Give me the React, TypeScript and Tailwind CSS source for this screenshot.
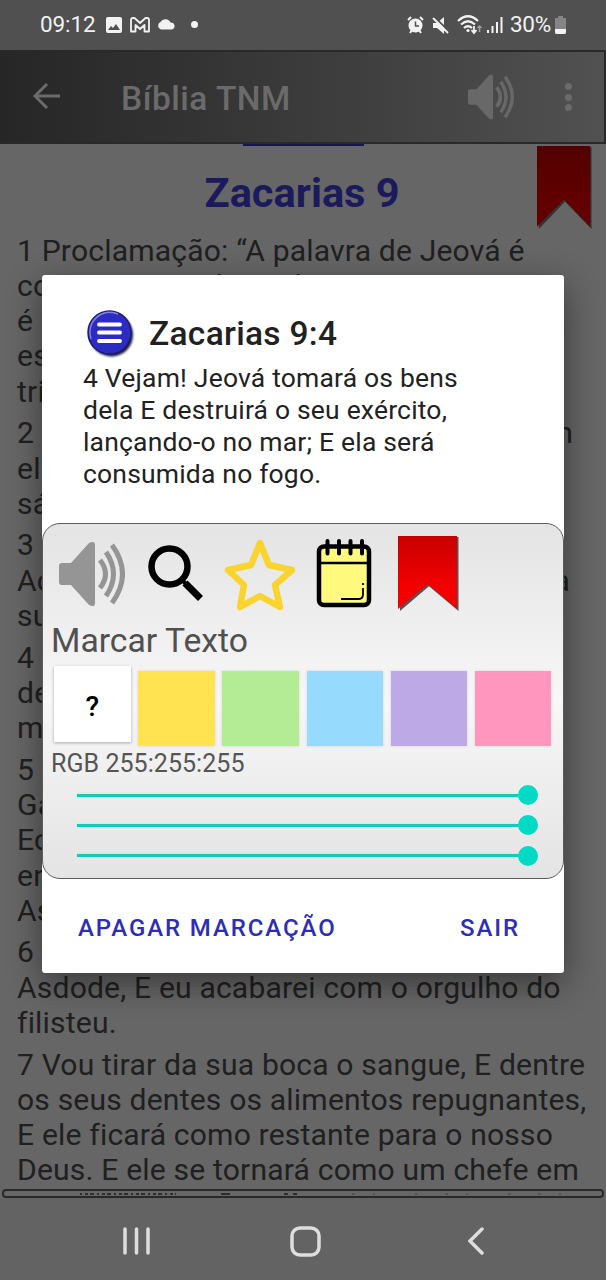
import React from "react";

const verses: string[][] = [
  ["1 Proclamação: “A palavra de Jeová é", "contra a terra de Hadraque, E Damasco", "é o seu alvo — Pois os olhos de Jeová", "estão sobre a humanidade E sobre as", "tribos de Israel —"],
  ["2 E contra Hamate, que faz divisa com", "ela, E contra Tiro e Sídon, pois são", "sábias."],
  ["3 Tiro construiu para si um baluarte.", "Acumulou prata como pó E ouro como a", "sujeira das ruas."],
  ["4 Vejam! Jeová tomará os bens", "dela E destruirá o seu exército, no", "mar; E ela será consumida no fogo."],
  ["5 Ascalom verá isso e terá medo;", "Gaza sentirá muita angústia, Também", "Ecrom, porque a sua", "envergonhada. De Gaza", "Ascalom não será habitada."],
  ["6 Um filho ilegítimo se fixará em", "Asdode, E eu acabarei com o orgulho do", "filisteu."],
  ["7 Vou tirar da sua boca o sangue, E dentre", "os seus dentes os alimentos repugnantes,", "E ele ficará como restante para o nosso", "Deus. E ele se tornará como um chefe em"],
];

/* Lines that reach the right margin of the column. */
const fullLines: Record<string, string> = {
  "é o seu alvo — Pois os olhos de Jeová": "block w-[549px] [text-align-last:justify]",
  "2 E contra Hamate, que faz divisa com": "block w-[556px] [text-align-last:justify]",
  "Acumulou prata como pó E ouro como a": "block w-[553px] [text-align-last:justify]",
};

function Speaker({ className }: { className: string }) {
  return (
    <svg viewBox="0 0 66 66" className={className} fill="currentColor">
      <path d="M3 22H12L30 2Q36 -1 36 4V62Q36 67 30 64L12 44H3Q0 44 0 41V25Q0 22 3 22Z" />
      <g fill="none" stroke="currentColor" strokeWidth="5">
        <path d="M41 19Q52 33 41 47" />
        <path d="M47 11Q62 33 47 55" />
        <path d="M53 4Q74 33 53 62" />
      </g>
    </svg>
  );
}

function Ribbon({ id, className, from, to, edge }: { id: string; className: string; from: string; to: string; edge: string }) {
  return (
    <svg viewBox="0 0 61 76" preserveAspectRatio="none" className={className}>
      <defs>
        <linearGradient id={id} x1="0" y1="0" x2="0" y2="1">
          <stop offset="0" stopColor={from} />
          <stop offset=".7" stopColor={to} />
        </linearGradient>
      </defs>
      <path d="M1 1H60.500V76L31 51L2 76Z" fill={edge} />
      <path d="M0 0H59V74L30 49L0 74Z" fill={`url(#${id})`} />
    </svg>
  );
}

function StatusBar() {
  return (
    <div className="flex h-[50px] shrink-0 items-center bg-[#505050] pl-[40px] text-[#f2f2f2]">
      <span className="w-[66px] text-[22.5px] tracking-[-0.1px]">09:12</span>
      <svg className="h-[16px] w-[16px]" viewBox="0 0 16 16">
        <rect width="16" height="16" rx="2" fill="currentColor" />
        <path d="M2 13L5 9L7 11L10 7L14 13Z" fill="#505050" />
      </svg>
      <svg className="ml-[8px] h-[16px] w-[20px]" viewBox="0 0 20 16" fill="none" stroke="currentColor" strokeWidth="1.8" strokeLinejoin="round">
        <path d="M1 14.500V3Q1 1 3 1H4.500L10 6L15.500 1H17Q19 1 19 3V14.500H14.500V8L10 12L5.500 8V14.500Z" />
      </svg>
      <svg className="mb-[2px] ml-[7px] h-[12px] w-[19px]" viewBox="0 0 19 12" fill="currentColor">
        <path d="M4 11.500a4 4 0 0 1-.5-7.500A5.500 5 0 0 1 13.500 4.500A3.800 3.600 0 0 1 15 11.500Z" />
      </svg>
      <span className="mb-[2px] ml-[15px] h-[7px] w-[7px] rounded-full bg-[#f2f2f2]" />
      <svg className="ml-[209px] h-[18px] w-[17px]" viewBox="0 0 17 18">
        <circle cx="8.5" cy="9.5" r="7" fill="currentColor" />
        <path d="M1 4L4 1M16 4L13 1M3 17L5 14M14 17L12 14" stroke="currentColor" strokeWidth="2" />
        <path d="M8.5 5.5V10H12" stroke="#505050" strokeWidth="1.5" fill="none" />
      </svg>
      <svg className="ml-[8px] h-[17px] w-[18px]" viewBox="0 0 18 17">
        <path d="M1 6H5L12 0V17L5 11H1Z" fill="currentColor" />
        <path d="M2.500 0L18 15.500" stroke="#505050" strokeWidth="2" />
        <path d="M1 1L16 16" stroke="currentColor" strokeWidth="2" />
      </svg>
      <svg className="ml-[7px] h-[20px] w-[25px]" viewBox="0 0 25 20" fill="none" stroke="currentColor" strokeWidth="2.2">
        <path d="M1 6Q11 -3.500 21 6M4 9.500Q11 3 18 9.500M7 13Q11 9.500 15 13" />
        <circle cx="11" cy="15.500" r="1.600" fill="currentColor" stroke="none" />
        <path d="M17 11V17M14.500 15L17 18L19.500 15" strokeWidth="1.800" />
        <path d="M22.500 17V11M20.500 13L22.500 11L24.500 13" strokeWidth="1.500" opacity=".5" />
      </svg>
      <svg className="ml-[5px] h-[16px] w-[16px]" viewBox="0 0 16 16" fill="currentColor">
        <path d="M0 13H2V16H0ZM4.500 9H6.500V16H4.500ZM9 5H11V16H9ZM13.500 0H15.500V16H13.500Z" />
      </svg>
      <span className="ml-[7px] w-[45px] text-[22.5px] tracking-[-0.3px]">30%</span>
      <svg className="h-[18px] w-[11px]" viewBox="0 0 11 18">
        <path d="M3 0H8V2H11V18H0V2H3Z" fill="#858585" />
        <path d="M0 13H11V16Q11 18 9 18H2Q0 18 0 16Z" fill="#f2f2f2" />
      </svg>
    </div>
  );
}

function AppBar() {
  return (
    <div className="flex h-[94px] shrink-0 items-center border-y-2 border-r-2 border-[#292929] bg-linear-to-r from-[#262626] to-[#515151] pl-[33px] text-[#6b6b6b]">
      <svg className="mb-[2px] h-[26px] w-[27px]" viewBox="0 0 27 26" fill="none" stroke="currentColor" strokeWidth="3">
        <path d="M14 1L2 13L14 25M2 13H27" />
      </svg>
      <h1 className="ml-[61px] w-[346px] pt-[4px] text-[33.5px] font-medium tracking-[0.5px]">Bíblia TNM</h1>
      <Speaker className="h-[46px] w-[48px] text-[#686868]" />
      <div className="ml-[50px] flex flex-col gap-[3.5px]">
        <i className="h-[7px] w-[7px] rounded-full bg-[#6b6b6b]" />
        <i className="h-[7px] w-[7px] rounded-full bg-[#6b6b6b]" />
        <i className="h-[7px] w-[7px] rounded-full bg-[#6b6b6b]" />
      </div>
    </div>
  );
}

function Dialog() {
  return (
    <div className="absolute top-[275px] left-[42px] flex h-[698px] w-[522px] flex-col rounded-[3px] bg-white shadow-[0_10px_34px_rgba(0,0,0,0.45)]">
      <div className="flex h-[248px] flex-col pt-[34px] pl-[41px]">
        <div className="flex h-[50px] items-center">
          <svg className="ml-[3px] h-[50px] w-[50px]" viewBox="0 0 50 50">
            <defs>
              <filter id="soft" x="-20%" y="-20%" width="140%" height="140%"><feGaussianBlur stdDeviation="1.2" /></filter>
            </defs>
            <circle cx="25.500" cy="26" r="21.500" fill="#17173f" filter="url(#soft)" />
            <circle cx="23.500" cy="23.500" r="21.500" fill="#2c2cc4" stroke="#1d1d70" strokeWidth="1.500" />
            <path d="M5 30A20 20 0 0 1 32 5" fill="none" stroke="#8080e0" strokeWidth="1.500" />
            <path d="M13 15.500H34M13 23.500H34M13 32H34" stroke="white" strokeWidth="3.800" strokeLinecap="round" />
          </svg>
          <h2 className="ml-[13px] pt-px text-[33.5px] font-medium tracking-[0.3px] text-[#212121]">Zacarias 9:4</h2>
        </div>
        <p className="mt-[3px] text-[26.5px] leading-[32px] tracking-[0.18px] whitespace-nowrap text-[#222]">
          4 Vejam! Jeová tomará os bens<br />
          dela E destruirá o seu exército,<br />
          lançando-o no mar; E ela será<br />
          consumida no fogo.
        </p>
      </div>
      <div className="flex h-[356px] flex-col rounded-[18px] border-[1.5px] border-[#5c5c5c] bg-linear-to-b from-[#e4e4e4] via-[#f7f7f7] to-[#e4e4e4]">
        <div className="flex h-[98.500px] items-start pl-[16px]">
          <Speaker className="mt-[17px] h-[66px] w-[66px] text-[#959595]" />
          <svg className="mt-[20.500px] ml-[23px] h-[58px] w-[57px]" viewBox="0 0 57 58" fill="none" stroke="#000">
            <circle cx="21.500" cy="21.500" r="18" strokeWidth="6.500" />
            <path d="M37 38L52.500 53.500" strokeWidth="7" />
            <path d="M33 34L39 40" strokeWidth="4" />
          </svg>
          <svg className="mt-[13.500px] ml-[18px] h-[74px] w-[74px]" viewBox="0 0 74 74" fill="none" stroke="#f9d42f" strokeWidth="6.500" strokeLinejoin="round">
            <path d="M37 5L46 27L69 32L52 47L57 69L37 58L17 69L21 47L5 32L28 27Z" />
          </svg>
          <svg className="mt-[13px] ml-[19px] h-[72px] w-[56px]" viewBox="0 0 56 72">
            <rect x="3" y="9.500" width="50" height="58.500" rx="5" fill="#fffa7d" stroke="#000" strokeWidth="4.500" />
            <path d="M3 26H53" stroke="#000" strokeWidth="2.500" />
            <path d="M11.500 4V16.500M23 4V16.500M34.500 4V16.500M46 4V16.500" stroke="#000" strokeWidth="4" strokeLinecap="round" />
            <path d="M25 62H43Q47 62 47 57V51M47 48V46" fill="none" stroke="#000" strokeWidth="1.800" />
          </svg>
          <Ribbon id="ribbon" className="mt-[11.500px] ml-[26px] h-[75px] w-[61px]" from="#c80000" to="#f40000" edge="#555" />
        </div>
        <h3 className="h-[43px] pl-[8px] text-[33.7px] leading-[36px] text-[#505050]">Marcar Texto</h3>
        <div className="flex h-[82px] gap-[7.7px] pl-[11px]">
          <button className="h-[76px] w-[76.500px] bg-white pt-[6px] text-[28px] font-medium text-black shadow-[0_1px_3px_rgba(0,0,0,0.3)]">?</button>
          <i className="mt-[5px] h-[75px] w-[76.500px] bg-[#ffe351] shadow-[0_0_3px_rgba(0,0,0,0.12)]" />
          <i className="mt-[5px] h-[75px] w-[76.500px] bg-[#b4ec96] shadow-[0_0_3px_rgba(0,0,0,0.12)]" />
          <i className="mt-[5px] h-[75px] w-[76.500px] bg-[#96dbfd] shadow-[0_0_3px_rgba(0,0,0,0.12)]" />
          <i className="mt-[5px] h-[75px] w-[76.500px] bg-[#bda9e6] shadow-[0_0_3px_rgba(0,0,0,0.12)]" />
          <i className="mt-[5px] h-[75px] w-[76.500px] bg-[#fe96bd] shadow-[0_0_3px_rgba(0,0,0,0.12)]" />
        </div>
        <p className="h-[32.500px] pl-[8px] text-[25px] leading-[31px] tracking-[0.05px] text-[#555]">RGB 255:255:255</p>
        {[0, 1, 2].map((n) => (
          <div key={n} className="flex h-[30.300px] items-center pl-[34px]">
            <span className="h-[3px] w-[443px] bg-[#14cbb9] shadow-[0_0_2px_#9ef0e8]" />
            <span className="-ml-[2px] h-[20px] w-[20px] rounded-full bg-[#03dac5]" />
          </div>
        ))}
      </div>
      <div className="flex h-[94px] items-center justify-between pt-[3px] pr-[44px] pl-[36px] text-[24px] font-medium tracking-[1.9px] text-[#2e2eb4]">
        <button>APAGAR MARCAÇÃO</button>
        <button>SAIR</button>
      </div>
    </div>
  );
}

export default function App() {
  return (
    <main className="relative flex h-[1280px] w-[606px] flex-col overflow-hidden bg-[#666] font-['Roboto',sans-serif]">
      <StatusBar />
      <AppBar />
      <section className="h-[1045px] shrink-0 overflow-hidden text-[#202020]">
        <div className="mx-auto h-[2px] w-[121px] bg-[#15154f]" />
        <div className="relative">
          <h2 className="pt-[22px] pr-[2px] text-center text-[41.5px] leading-[50px] font-bold text-[#1a1a5c]">Zacarias 9</h2>
          <Ribbon id="mark" className="absolute top-0 left-[537px] h-[83px] w-[55px]" from="#530000" to="#620000" edge="#333" />
        </div>
        <div className="flex flex-col gap-[6.200px] pt-[14.500px] pl-[17px]">
          {verses.map((verse) => (
            <p key={verse[0]} className="text-[30.100px] leading-[35.310px] tracking-[0.17px] whitespace-nowrap">
              {verse.map((line) => (
                <span key={line} className={fullLines[line] ?? "block"}>{line}</span>
              ))}
            </p>
          ))}
        </div>
      </section>
      <div className="mx-[2px] h-[9px] shrink-0 rounded-[4px] border-2 border-[#292929]">
        <svg className="h-[5px] w-full" fill="none" stroke="#1c1c1c">
          <path d="M76 3H172" strokeWidth="1.500" strokeDasharray="2 3 3 2 4 3" />
          <path d="M217 3H226M280 3H284M289 3H293" strokeWidth="1.500" />
          <path d="M348 3H566" strokeDasharray="3 18 2 40 3 27" opacity=".5" />
        </svg>
      </div>
      <nav className="flex grow items-center bg-[#636363] pt-[4px] pl-[123px] text-[#dedede]">
        <svg className="h-[28px] w-[27px]" viewBox="0 0 27 28" stroke="currentColor" strokeWidth="3.500" strokeLinecap="round"><path d="M2 2V26M13.500 2V26M25 2V26" /></svg>
        <svg className="ml-[140px] h-[31px] w-[31px]" viewBox="0 0 31 31" fill="none" stroke="currentColor" strokeWidth="3.500"><rect x="2" y="2" width="27" height="27" rx="8" /></svg>
        <svg className="ml-[147px] h-[28px] w-[16px]" viewBox="0 0 16 28" fill="none" stroke="currentColor" strokeWidth="3.500" strokeLinecap="round"><path d="M14 2L2 14L14 26" /></svg>
      </nav>
      <Dialog />
    </main>
  );
}
